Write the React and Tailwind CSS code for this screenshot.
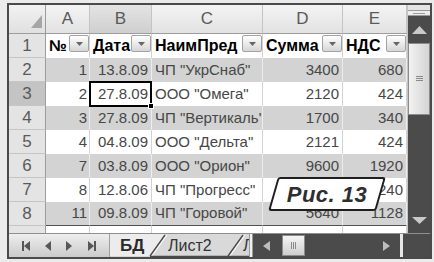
import React from "react";

const rows = [
  { n: "2", a: "1", b: "13.8.09", c: 'ЧП "УкрСнаб"', d: "3400", e: "680" },
  { n: "3", a: "2", b: "27.8.09", c: 'ООО "Омега"', d: "2120", e: "424" },
  { n: "4", a: "3", b: "27.8.09", c: 'ЧП "Вертикаль"', d: "1700", e: "340" },
  { n: "5", a: "4", b: "04.8.09", c: 'ООО "Дельта"', d: "2121", e: "424" },
  { n: "6", a: "7", b: "03.8.09", c: 'ООО "Орион"', d: "9600", e: "1920" },
  { n: "7", a: "8", b: "12.8.06", c: 'ЧП "Прогресс"', d: "", e: "240" },
  { n: "8", a: "11", b: "09.8.09", c: 'ЧП "Горовой"', d: "5640", e: "1128" },
];

const headers = [
  { label: "№", w: "w-[44px]" },
  { label: "Дата", w: "w-[62px]" },
  { label: "НаимПред", w: "w-[111px]" },
  { label: "Сумма", w: "w-[80px]" },
  { label: "НДС", w: "w-[64px]" },
];

const FilterBtn = () => (
  <span className="absolute right-0 top-[1px] w-[20px] h-[17px] rounded-[2px] border border-[#a3a3a3] bg-linear-to-b from-white to-[#d6d6d6] flex items-center justify-center">
    <svg width="7" height="4" viewBox="0 0 7 4">
      <path d="M0 0h7L3.5 4z" fill="#666" />
    </svg>
  </span>
);

const DataRow = ({ r, i }) => {
  const gray = i % 2 === 0;
  const sel = r.n === "3";
  const last = r.n === "8";
  const cell = `h-full flex items-center overflow-hidden whitespace-nowrap border-r ${
    gray ? "bg-[#d3d3d3] border-[#ececec]" : "bg-white border-[#d2d2d2]"
  } ${last ? "border-b border-b-[#4f4f4f]" : ""}`;
  return (
    <div className="flex h-[24px] text-[15px] text-[#474747]">
      <div
        className={`w-[37px] h-full flex items-center justify-center text-[17px] text-[#5a5a5a] border-r border-r-[#9c9c9c] border-b border-b-[#c6c6c6] ${
          sel ? "bg-[#c4c4c4]" : "bg-[#e4e4e4]"
        }`}
      >
        {r.n}
      </div>
      <div className={`w-[44px] justify-end pr-[2px] ${cell}`}>{r.a}</div>
      <div className={`w-[62px] justify-end pr-[3px] relative overflow-visible ${cell}`}>
        {r.b}
        {sel && (
          <>
            <span className="absolute -left-[1px] -top-[1px] -right-[1px] -bottom-[1px] border-2 border-black z-10" />
            <span className="absolute -right-[3px] -bottom-[3px] w-[6px] h-[6px] bg-black border border-white z-20" />
          </>
        )}
      </div>
      <div className={`w-[111px] pl-[3px] ${cell}`}>{r.c}</div>
      <div className={`w-[80px] justify-end pr-[3px] ${cell}`}>{r.d}</div>
      <div className={`w-[64px] justify-end pr-[3px] ${cell}`}>{r.e}</div>
    </div>
  );
};

const VScroll = () => (
  <div className="w-[23px] flex flex-col border-l border-[#c4c4c4] bg-[#4b4b4b]">
    <div className="h-[5px] bg-[#e4e4e4]" />
    <div className="h-[6px] bg-[#ededed] border-y border-[#9a9a9a] flex items-center justify-center">
      <span className="w-[12px] h-px bg-[#9a9a9a]" />
    </div>
    <div className="h-[27px] flex items-center justify-center">
      <svg width="15" height="8" viewBox="0 0 15 8">
        <path d="M7.5 0L15 8H0z" fill="#c9c9c9" />
      </svg>
    </div>
    <div className="h-[72px] bg-linear-to-r from-[#f2f2f2] to-[#d4d4d4] border border-[#8c8c8c] flex items-center justify-center">
      <svg width="7" height="6" viewBox="0 0 7 6">
        <path d="M0 0.5h7M0 2.5h7M0 4.5h7" stroke="#8a8a8a" strokeWidth="1" />
      </svg>
    </div>
    <div className="flex-1" />
    <div className="h-[26px] flex items-center justify-center">
      <svg width="15" height="7" viewBox="0 0 15 7">
        <path d="M0 0h15L7.5 7z" fill="#c9c9c9" />
      </svg>
    </div>
  </div>
);

const TabBar = () => (
  <div className="h-[24px] flex border-t border-[#8f8f8f] bg-[#d6d6d6]">
    <div className="w-[101px] shrink-0 bg-linear-to-b from-[#eeeeee] to-[#cbcbcb] border-r border-[#a0a0a0]">
      <svg width="100" height="23" viewBox="0 0 100 23">
        <g fill="#575757">
          <rect x="13" y="7" width="2" height="10" />
          <path d="M21 7v10l-6-5z" />
          <path d="M42 7v10l-6-5z" />
          <path d="M57 7v10l6-5z" />
          <path d="M79 7v10l6-5z" />
          <rect x="85" y="7" width="2" height="10" />
        </g>
      </svg>
    </div>
    <div className="w-[139px] shrink-0 relative flex items-center overflow-hidden text-[16px] text-[#333]">
      <svg className="absolute inset-0" width="139" height="23" viewBox="0 0 139 23">
        <path d="M0 0H55L40 22H0z" fill="#ececec" />
        <path d="M55 0H133L118 22H40z" fill="#d9d9d9" />
        <path d="M40 22L55 1M118 22L133 1" stroke="#4a4a4a" strokeWidth="1.3" fill="none" />
        <path d="M42 22L57 1M120 22L135 1" stroke="#ffffff" strokeWidth="1" fill="none" />
        <path d="M40 22.5H139" stroke="#4a4a4a" strokeWidth="1.5" />
      </svg>
      <span className="relative shrink-0 w-[58px] pl-[10px] font-bold text-[17px] text-[#2a2a2a]">БД</span>
      <span className="relative shrink-0 w-[75px]">Лист2</span>
      <span className="relative shrink-0">Лист3</span>
    </div>
    <div className="w-[4px] shrink-0 bg-[#efefef] border-x border-[#9a9a9a]" />
    <div className="w-[147px] shrink-0 bg-[#4b4b4b] flex items-center">
      <svg className="ml-[10px]" width="7" height="10" viewBox="0 0 7 10">
        <path d="M7 0v10L0 5z" fill="#bdbdbd" />
      </svg>
      <div className="ml-[12px] w-[23px] h-[21px] bg-linear-to-b from-[#f4f4f4] to-[#cfcfcf] border border-[#8c8c8c] flex items-center justify-center">
        <svg width="6" height="7" viewBox="0 0 6 7">
          <path d="M0.5 0v7M2.5 0v7M4.5 0v7" stroke="#8a8a8a" strokeWidth="1" />
        </svg>
      </div>
      <svg className="ml-[78px]" width="7" height="10" viewBox="0 0 7 10">
        <path d="M0 0v10L7 5z" fill="#bdbdbd" />
      </svg>
    </div>
    <div className="w-[3px] shrink-0 bg-[#e6e6e6]" />
    <div className="flex-1 bg-[#4b4b4b]" />
  </div>
);

export default function App() {
  return (
    <div className="relative w-[434px] h-[262px] bg-[#ebebeb] pt-[3px] pl-[7px] pr-[2px] pb-[3px] font-['Liberation_Sans',Arial,sans-serif]">
      <div className="h-full border-2 border-[#4a4a4a] flex flex-col overflow-hidden bg-white">
        <div className="flex h-[228px]">
          <div className="w-[398px] flex flex-col">
            {/* column letters */}
            <div className="flex h-[29px] text-[17px] text-[#5a5a5a]">
              <div className="w-[37px] h-full relative bg-linear-to-b from-[#f2f2f2] to-[#e0e0e0] border-r border-[#9c9c9c] border-b border-b-[#9d9d9d]">
                <svg className="absolute left-[22px] top-[10px]" width="11" height="13" viewBox="0 0 11 13">
                  <path d="M11 0v13H0z" fill="#a6a6a6" />
                </svg>
              </div>
              {["A", "B", "C", "D", "E"].map((l, i) => (
                <div
                  key={l}
                  className={`${headers[i].w} h-full flex items-center justify-center border-r border-[#c4c4c4] border-b border-b-[#9d9d9d] bg-linear-to-b ${
                    l === "B" ? "from-[#e4e4e4] to-[#cfcfcf]" : "from-[#f4f4f4] to-[#e2e2e2]"
                  }`}
                >
                  {l}
                </div>
              ))}
            </div>
            {/* table header row */}
            <div className="flex h-[24px]">
              <div className="w-[37px] h-full flex items-center justify-center text-[17px] text-[#5a5a5a] bg-[#e4e4e4] border-r border-r-[#9c9c9c] border-b border-b-[#c6c6c6]">
                1
              </div>
              {headers.map((h) => (
                <div
                  key={h.label}
                  className={`${h.w} h-full relative flex items-center pl-[3px] overflow-hidden whitespace-nowrap bg-white border-r border-[#d2d2d2] text-[16px] font-bold text-black`}
                >
                  {h.label}
                  <FilterBtn />
                </div>
              ))}
            </div>
            {rows.map((r, i) => (
              <DataRow key={r.n} r={r} i={i} />
            ))}
            <div className="flex flex-1">
              <div className="w-[37px] bg-[#e4e4e4] border-r border-[#9c9c9c]" />
              {headers.map((h) => (
                <div key={h.label} className={`${h.w} bg-white border-r border-[#d2d2d2]`} />
              ))}
            </div>
          </div>
          <VScroll />
        </div>
        <TabBar />
      </div>

      {/* figure caption */}
      <div className="absolute left-[273px] top-[177px] w-[108px] h-[34px] flex items-center justify-center">
        <div className="absolute inset-0 -skew-x-[16deg] bg-white border-[2.5px] border-[#1f1f1f] rounded-[3px]" />
        <span className="relative text-[22px] font-bold italic text-[#2e2e2e] tracking-[0.5px]">Рис. 13</span>
      </div>
    </div>
  );
}
